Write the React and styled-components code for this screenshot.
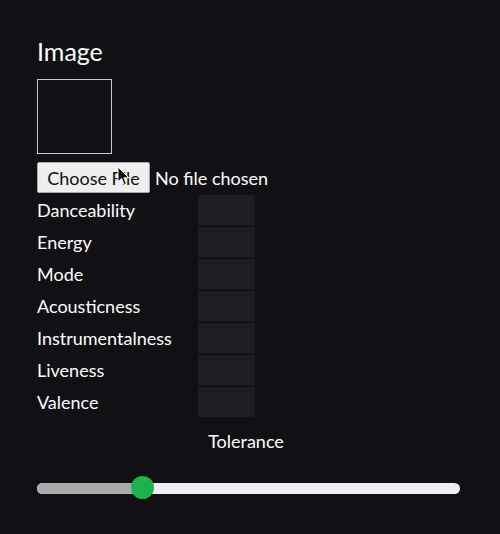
import React from "react"
import styled, { createGlobalStyle } from "styled-components"

const Global = createGlobalStyle`
  html, body {
    margin: 0;
    padding: 0;
    background: #111014;
  }
  body {
    font-family: Lato, "Liberation Sans", Arial, sans-serif;
    color: #fff;
  }
`

const Page = styled.div`
  width: 500px;
  min-height: 534px;
  box-sizing: border-box;
  padding: 36px 40px 0 37px;
`

const Heading = styled.h2`
  margin: 0 0 13px;
  font-size: 25px;
  font-weight: 400;
  line-height: 30px;
`

const Preview = styled.div`
  width: 73px;
  height: 73px;
  border: 1px solid #c9c9c9;
  margin-bottom: 8px;
`

const FileRow = styled.div`
  position: relative;
  display: flex;
  align-items: center;
  gap: 5px;
  height: 31px;
  margin-bottom: 2px;
`

const FileButton = styled.button`
  height: 31px;
  width: 113px;
  box-sizing: border-box;
  background: #efefef;
  border: 1px solid #a9a9a9;
  border-radius: 2px;
  font-family: Lato, "Liberation Sans", Arial, sans-serif;
  font-size: 18px;
  color: #111;
  padding: 0;
`

const FileLabel = styled.span`
  font-size: 18px;
`

const Cursor = styled.svg`
  position: absolute;
  left: 80px;
  top: 4px;
`

const Features = styled.div`
  display: flex;
  flex-direction: column;
  gap: 2px;
`

const Row = styled.label`
  display: grid;
  grid-template-columns: 161px 57px;
  align-items: center;
  height: 30px;
  font-size: 18px;
`

const Field = styled.input`
  width: 57px;
  height: 30px;
  box-sizing: border-box;
  border: none;
  background: #1c1e23;
  color: #fff;
  outline: none;
`

const Caption = styled.div`
  text-align: center;
  font-size: 18px;
  margin: 13px 0 0;
  width: 418px;
  line-height: 22px;
`

const SliderWrap = styled.div`
  position: relative;
  width: 423px;
  height: 24px;
  margin-top: 24px;
  display: flex;
  align-items: center;
`

const Track = styled.div`
  width: 100%;
  height: 11px;
  border-radius: 6px;
  background: #eeeef0;
  overflow: hidden;
`

const Fill = styled.div`
  height: 100%;
  background: #ababab;
`

const Thumb = styled.div`
  position: absolute;
  top: 0;
  width: 23px;
  height: 23px;
  margin-left: -11.5px;
  border-radius: 50%;
  background: #1db24b;
`

const features = [
  "Danceability",
  "Energy",
  "Mode",
  "Acousticness",
  "Instrumentalness",
  "Liveness",
  "Valence",
]

export default function App() {
  const tolerance = 0.25
  return (
    <Page>
      <Global />
      <Heading>Image</Heading>
      <Preview />
      <FileRow>
        <FileButton>Choose File</FileButton>
        <FileLabel>No file chosen</FileLabel>
        <Cursor width="14" height="20" viewBox="0 0 14 20">
          <path
            d="M1 1 L1 16 L4.6 12.6 L7.2 18.6 L9.4 17.6 L6.9 11.8 L11.8 11.8 Z"
            fill="#111"
            stroke="#fff"
            strokeWidth="1"
            strokeLinejoin="round"
          />
        </Cursor>
      </FileRow>
      <Features>
        {features.map(f => (
          <Row key={f}>
            <span>{f}</span>
            <Field type="text" />
          </Row>
        ))}
      </Features>
      <Caption>Tolerance</Caption>
      <SliderWrap>
        <Track>
          <Fill style={{ width: `${tolerance * 100}%` }} />
        </Track>
        <Thumb style={{ left: `${tolerance * 100}%` }} />
      </SliderWrap>
    </Page>
  )
}
